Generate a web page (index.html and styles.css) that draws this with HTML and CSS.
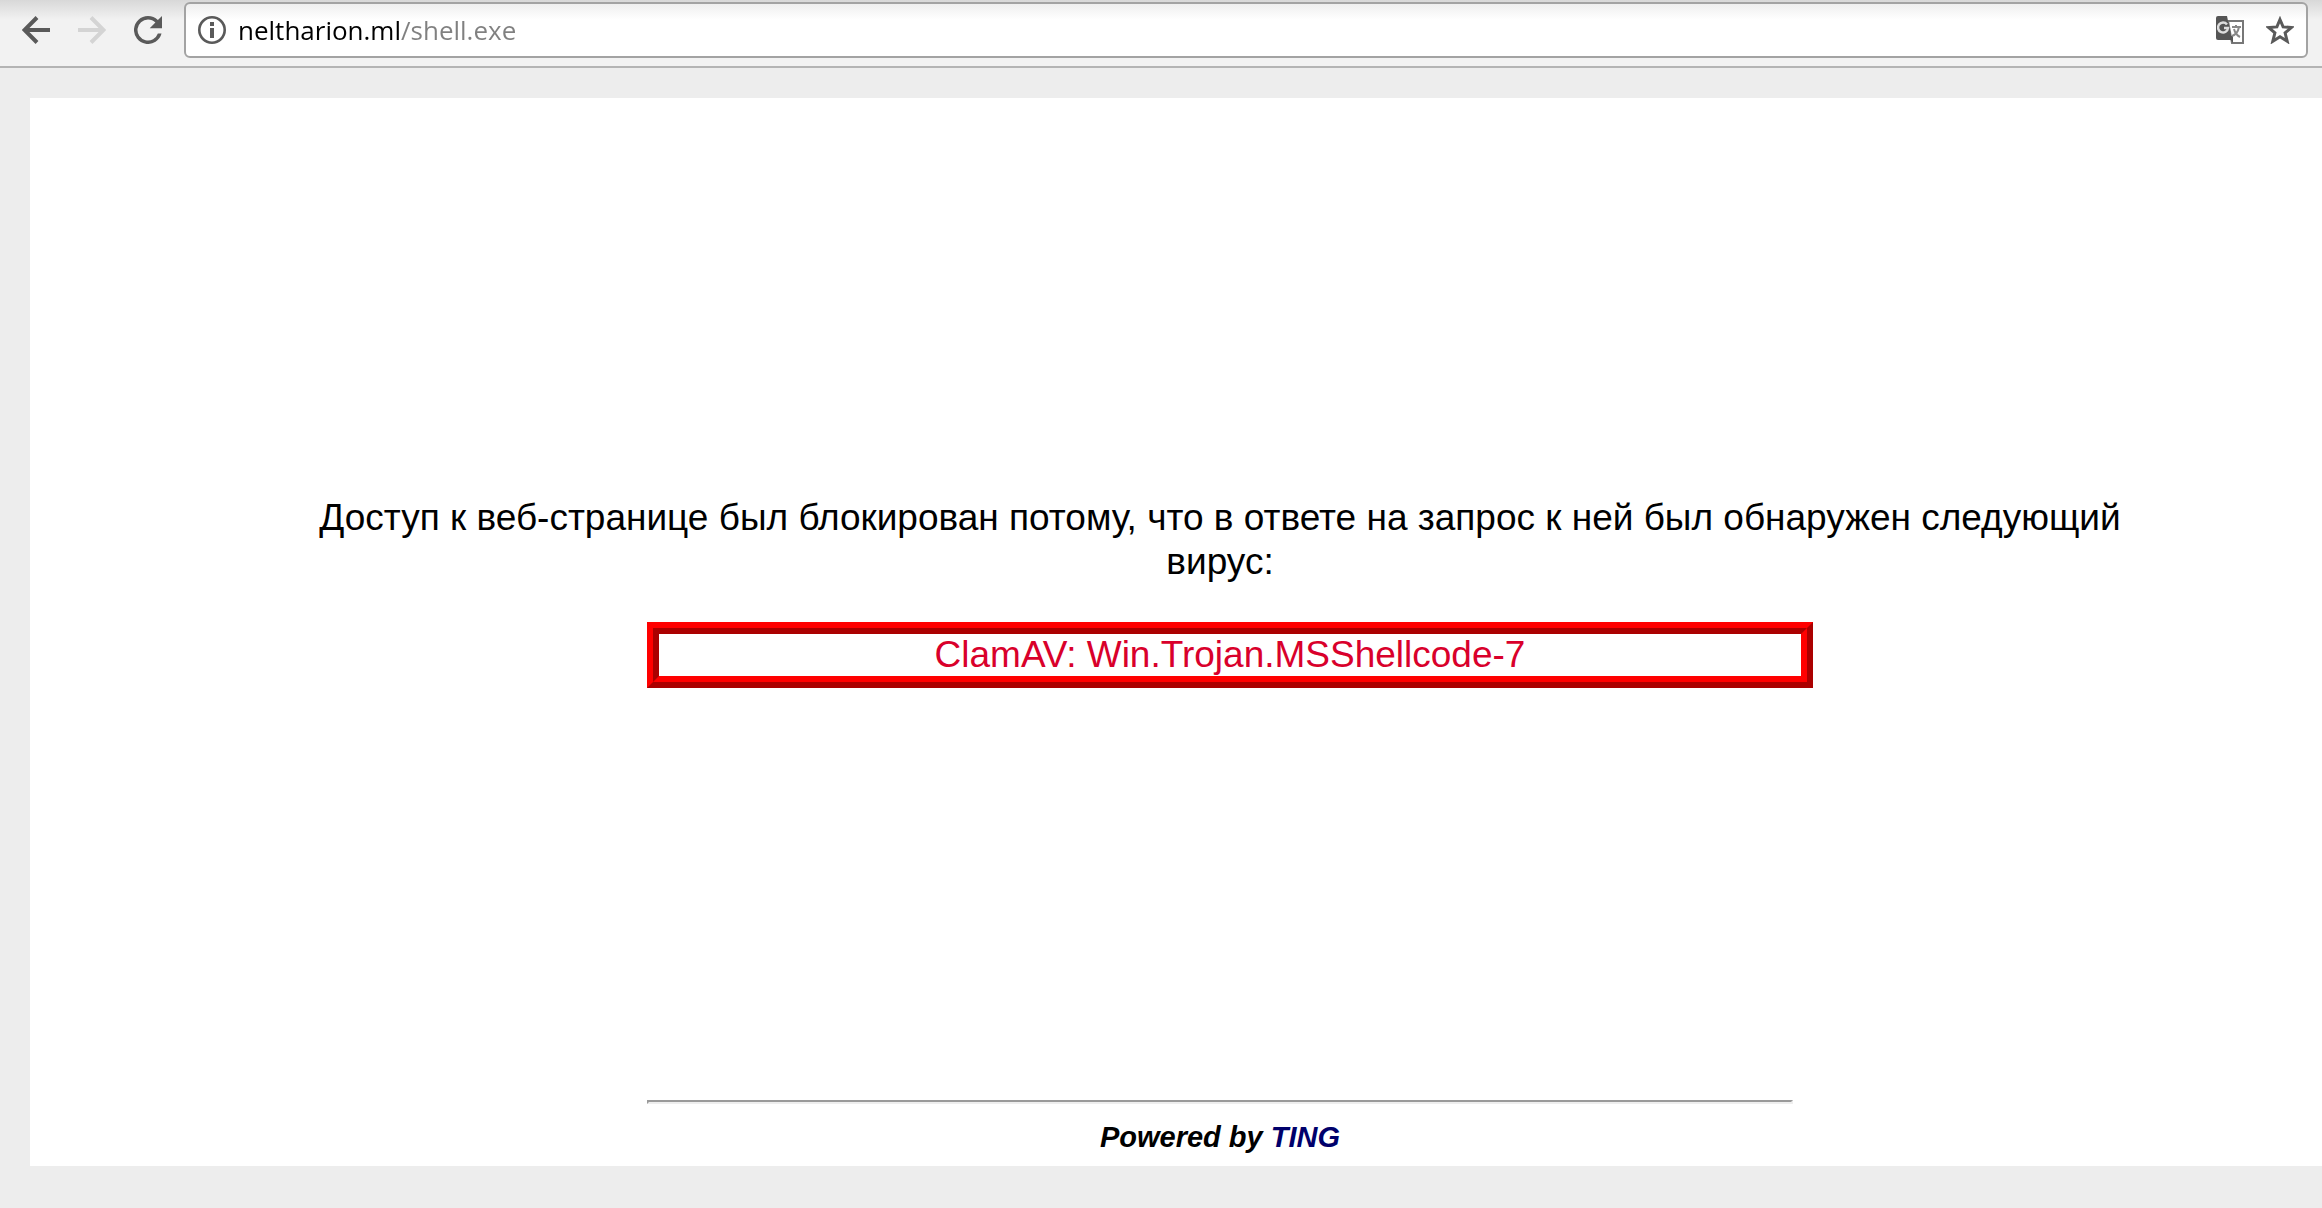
FILE: index.html
```html
<!DOCTYPE html>
<html lang="ru">
<head>
<meta charset="utf-8">
<title>neltharion.ml/shell.exe</title>
<link rel="stylesheet" href="styles.css">
</head>
<body>
<header class="toolbar">
  <nav class="nav">
    <button class="icon-button" type="button" aria-label="Назад">
      <svg class="icon" viewBox="0 0 28 28"><path d="M28 14H3M15 1.500 2.500 14 15 26.500" fill="none" stroke="currentColor" stroke-width="4"/></svg>
    </button>
    <button class="icon-button" type="button" aria-label="Вперёд" disabled>
      <svg class="icon" viewBox="0 0 28 28"><path d="M0 14H25M13 1.500 25.500 14 13 26.500" fill="none" stroke="currentColor" stroke-width="4"/></svg>
    </button>
    <button class="icon-button" type="button" aria-label="Обновить">
      <svg class="icon" viewBox="4 4 16 16"><path fill="currentColor" d="M17.650 6.350A7.960 7.960 0 0 0 12 4a8 8 0 1 0 7.730 10h-2.080A6 6 0 1 1 12 6c1.660 0 3.140.690 4.220 1.780L13 11h7V4z"/></svg>
    </button>
  </nav>
  <form class="address">
    <button class="icon-button" type="button" aria-label="Сведения о сайте">
      <svg class="icon" viewBox="0 0 28 28"><circle cx="14" cy="14" r="12.700" fill="none" stroke="currentColor" stroke-width="2.600"/><path fill="currentColor" d="M12 6h4v4h-4zM12 12h4v10h-4z"/></svg>
    </button>
    <input class="url" type="text" aria-label="Адрес" value="neltharion.ml/shell.exe">
    <button class="icon-button" type="button" aria-label="Перевести">
      <svg class="icon" viewBox="0 0 28 28"><path fill="#fff" stroke="#777" stroke-width="2" d="M12 5h15v22H16z"/><path fill="#555" d="M2 0h9l5 24H2a2 2 0 0 1-2-2V2a2 2 0 0 1 2-2z"/><path d="M11 8.500A5 5 0 1 0 12 12H8" fill="none" stroke="#ddd" stroke-width="2.500"/><path fill="#555" d="M12 20h5v7z"/><path d="M16 11h9M20 9v2M23 11c-1 5-4 8-7 9M18 13c1 4 4 7 6 8" fill="none" stroke="#888" stroke-width="2"/></svg>
    </button>
    <button class="icon-button" type="button" aria-label="Добавить в закладки">
      <svg class="icon" viewBox="0 0 28 28"><path d="M14 3.500 17.100 10.900 25.500 11.500 19.100 16.900 21.200 25.300 14 20.800 6.800 25.300 8.900 16.900 2.500 11.500 10.900 10.900z" fill="none" stroke="currentColor" stroke-width="3"/></svg>
    </button>
  </form>
</header>
<main class="panel">
  <p class="message">Доступ к веб-странице был блокирован потому, что в ответе на запрос к ней был обнаружен следующий вирус:</p>
  <div class="column">
    <p class="threat">ClamAV: Win.Trojan.MSShellcode-7</p>
    <hr class="rule">
    <p class="powered">Powered by <a class="brand" href="#">TING</a></p>
  </div>
</main>
</body>
</html>
```
FILE: styles.css
```css
* {
  box-sizing: border-box;
}

body {
  margin: 0;
  background: #ededed;
  color: #000;
  font-family: "Liberation Sans", Arial, sans-serif;
}

.toolbar {
  display: flex;
  align-items: center;
  gap: 22px;
  height: 68px;
  padding: 2px 14px 8px 22px;
  border-bottom: 2px solid #b4b4b4;
  background: linear-gradient(#d8d8d8, #f2f2f2 20px);
}

.nav {
  display: flex;
  gap: 28px;
}

.icon-button {
  display: block;
  flex: none;
  padding: 0;
  border: 0;
  background: none;
  color: #5a5a5a;
}

.icon-button:disabled {
  color: #d4d4d4;
}

.icon {
  display: block;
  width: 28px;
  height: 28px;
}

.address {
  display: flex;
  flex: 1;
  align-items: center;
  gap: 22px;
  height: 56px;
  padding: 0 12px;
  border: 2px solid #a3a3a3;
  border-radius: 6px;
  background: linear-gradient(#efefef, #fff 16px);
}

.url {
  flex: 1;
  min-width: 0;
  margin-left: -10px;
  padding: 0;
  border: 0;
  outline: 0;
  background: linear-gradient(90deg, #000 161px, #808080 161px) text;
  color: #808080;
  -webkit-text-fill-color: transparent;
  font: 26px/36px "Open Sans", "Noto Sans", sans-serif;
}

.panel {
  display: flex;
  flex-direction: column;
  align-items: center;
  margin: 30px 0 42px 30px;
  padding: 398px 0 10px 88px;
  background: #fff;
}

.message {
  width: 84%;
  margin: 0;
  font-size: 37px;
  line-height: 44px;
  text-align: center;
}

.column {
  width: 52%;
  margin-top: 38px;
}

.threat {
  width: calc(100% + 20px);
  margin: 0;
  border: 12px ridge #f00;
  color: #d9002b;
  font-size: 37px;
  line-height: 42px;
  text-align: center;
}

.rule {
  height: 4px;
  margin: 412px 0 14px;
  border: 2px inset #eee;
}

.powered {
  margin: 0;
  font-size: 29px;
  font-style: italic;
  font-weight: bold;
  line-height: 38px;
  text-align: center;
}

.brand {
  color: #00006b;
  text-decoration: none;
}
```
